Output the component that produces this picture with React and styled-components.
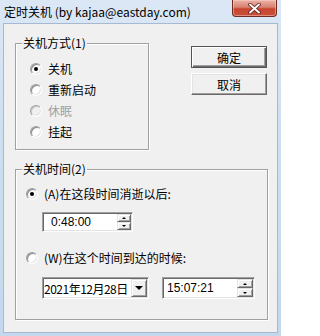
import React from 'react';
import styled, { createGlobalStyle } from 'styled-components';

const GlobalStyle = createGlobalStyle`
  html, body {
    margin: 0;
    padding: 0;
  }
  body {
    font-family: "Noto Sans CJK SC", "Liberation Sans", sans-serif;
    font-size: 12px;
    color: #000;
  }
`;

const Window = styled.div`
  box-sizing: border-box;
  width: 281px;
  height: 336px;
  display: flex;
  flex-direction: column;
  padding: 0 3px 3px;
  background: linear-gradient(to bottom, #dbe7f5 0%, #cddff1 40%, #c4d8ee 100%);
`;

const TitleBar = styled.div`
  height: 23px;
  display: flex;
  align-items: flex-start;
  justify-content: space-between;
`;

const Title = styled.div`
  padding-left: 1px;
  line-height: 23px;
  font-size: 12px;
  color: #000;
  white-space: nowrap;
`;

const CloseButton = styled.div`
  box-sizing: border-box;
  width: 45px;
  height: 17px;
  margin-right: 1px;
  display: flex;
  align-items: center;
  justify-content: center;
  border: 1px solid #6e2c22;
  border-top: none;
  border-radius: 0 0 4px 4px;
  background: linear-gradient(to bottom, #eab3a6 0%, #d98170 45%, #c7452f 55%, #c9503a 100%);
  box-shadow: inset 0 0 0 1px rgba(255, 220, 210, 0.45);
`;

const Client = styled.div`
  flex: 1;
  box-sizing: border-box;
  background: #f0f0f0;
  border: 1px solid #a6b9d0;
  padding: 19px 0 0 11px;
`;

const TopRow = styled.div`
  display: flex;
  align-items: flex-start;
`;

const GroupBox = styled.div`
  position: relative;
  box-sizing: border-box;
  width: ${p => p.w}px;
  padding: ${p => p.pad};
  border: 1px solid #a0a0a0;
  box-shadow: 1px 1px 0 #fff, inset 1px 1px 0 #fff;
  margin-top: ${p => p.mt || 0}px;
`;

const GroupLabel = styled.span`
  position: absolute;
  top: -8px;
  left: 6px;
  padding: 0 1px;
  line-height: 14px;
  background: #f0f0f0;
  white-space: nowrap;
`;

const RadioRow = styled.div`
  height: 21px;
  display: flex;
  align-items: center;
  gap: 6px;
  margin-top: ${p => p.mt || 0}px;
  color: ${p => (p.disabled ? '#a0a0a0' : '#000')};
  white-space: nowrap;
`;

const RadioCircle = styled.span`
  box-sizing: border-box;
  width: 12px;
  height: 12px;
  flex: none;
  border-radius: 50%;
  display: flex;
  align-items: center;
  justify-content: center;
  border: 1px solid;
  border-color: #a0a0a0 #fff #fff #a0a0a0;
  background: ${p => (p.disabled ? '#f0f0f0' : 'radial-gradient(circle at 60% 60%, #fff 40%, #e6e6e6 100%)')};
  box-shadow: inset 1px 1px 0 ${p => (p.disabled ? '#c8c8c8' : '#8a8a8a')},
    inset -1px -1px 0 #e3e3e3;

  &::after {
    content: '';
    width: 4px;
    height: 4px;
    border-radius: 50%;
    background: #000;
    display: ${p => (p.checked ? 'block' : 'none')};
  }
`;

const ButtonColumn = styled.div`
  display: flex;
  flex-direction: column;
  gap: 5px;
  margin: 3px 0 0 42px;
`;

const PushButton = styled.div`
  box-sizing: border-box;
  width: 76px;
  height: 22px;
  display: flex;
  align-items: center;
  justify-content: center;
  background: #f0f0f0;
  border: 1px solid;
  border-color: ${p => (p.primary ? '#555' : '#fff #696969 #696969 #fff')};
  box-shadow: ${p =>
    p.primary
      ? 'inset 1px 1px 0 #fff, inset -1px -1px 0 #696969, inset -2px -2px 0 #a0a0a0'
      : 'inset -1px -1px 0 #a0a0a0, inset 1px 1px 0 #e3e3e3'};
`;

const Sunken = styled.div`
  box-sizing: border-box;
  width: ${p => p.w}px;
  height: ${p => p.h}px;
  display: flex;
  background: #fff;
  border: 1px solid;
  border-color: #a0a0a0 #fff #fff #a0a0a0;
  box-shadow: inset 1px 1px 0 #696969, inset -1px -1px 0 #e3e3e3;
  padding: 1px;
`;

const FieldText = styled.div`
  flex: 1;
  display: flex;
  align-items: center;
  padding-left: ${p => p.pl}px;
  font-family: ${p => (p.cjk ? '"Noto Sans CJK SC", sans-serif' : '"Liberation Sans", "DejaVu Sans", sans-serif')};
  letter-spacing: ${p => p.ls || 0}px;
  white-space: nowrap;
`;

const EditIndent = styled.div`
  margin: ${p => p.mt}px 0 0 16px;
  display: flex;
  gap: 13px;
`;

const SpinColumn = styled.div`
  width: ${p => p.w}px;
  display: flex;
  flex-direction: column;
`;

const RaisedButton = styled.div`
  box-sizing: border-box;
  flex: 1;
  display: flex;
  align-items: center;
  justify-content: center;
  background: #f0f0f0;
  border: 1px solid;
  border-color: #e3e3e3 #696969 #696969 #e3e3e3;
  box-shadow: inset 1px 1px 0 #fff, inset -1px -1px 0 #a0a0a0;
`;

const DropButton = styled(RaisedButton)`
  flex: none;
  width: 16px;
`;

const Arrow = styled.span`
  width: 0;
  height: 0;
  border-left: ${p => p.size}px solid transparent;
  border-right: ${p => p.size}px solid transparent;
  ${p => (p.up ? 'border-bottom' : 'border-top')}: ${p => p.tall}px solid #000;
`;

const Spinner = ({ w }) => (
  <SpinColumn w={w}>
    <RaisedButton>
      <Arrow up size={2} tall={2} />
    </RaisedButton>
    <RaisedButton>
      <Arrow size={2} tall={2} />
    </RaisedButton>
  </SpinColumn>
);

const Radio = ({ label, checked, disabled, mt }) => (
  <RadioRow disabled={disabled} mt={mt}>
    <RadioCircle checked={checked} disabled={disabled} />
    <span>{label}</span>
  </RadioRow>
);

export default function App() {
  return (
    <>
      <GlobalStyle />
      <Window>
        <TitleBar>
          <Title>定时关机 (by kajaa@eastday.com)</Title>
          <CloseButton>
            <svg width="13" height="11" viewBox="0 0 13 11">
              <path d="M2 1.5 L11 9.5 M11 1.5 L2 9.5" stroke="#5a2018" strokeWidth="3.6" strokeLinecap="round" />
              <path d="M2 1.5 L11 9.5 M11 1.5 L2 9.5" stroke="#fff" strokeWidth="1.9" strokeLinecap="round" />
            </svg>
          </CloseButton>
        </TitleBar>
        <Client>
          <TopRow>
            <GroupBox w={134} pad="14px 0 7px 14px">
              <GroupLabel>关机方式(1)</GroupLabel>
              <Radio label="关机" checked />
              <Radio label="重新启动" />
              <Radio label="休眠" disabled />
              <Radio label="挂起" />
            </GroupBox>
            <ButtonColumn>
              <PushButton primary>确定</PushButton>
              <PushButton>取消</PushButton>
            </ButtonColumn>
          </TopRow>
          <GroupBox w={253} mt={19} pad="13px 0 20px 10px">
            <GroupLabel>关机时间(2)</GroupLabel>
            <Radio label="(A)在这段时间消逝以后:" checked />
            <EditIndent mt={8}>
              <Sunken w={91} h={20}>
                <FieldText pl={7}>0:48:00</FieldText>
                <Spinner w={14} />
              </Sunken>
            </EditIndent>
            <Radio label="(W)在这个时间到达的时候:" mt={15} />
            <EditIndent mt={9}>
              <Sunken w={107} h={22}>
                <FieldText pl={0} cjk ls={-0.5}>2021年12月28日</FieldText>
                <DropButton>
                  <Arrow size={4} tall={4} />
                </DropButton>
              </Sunken>
              <Sunken w={93} h={22}>
                <FieldText pl={3}>15:07:21</FieldText>
                <Spinner w={16} />
              </Sunken>
            </EditIndent>
          </GroupBox>
        </Client>
      </Window>
    </>
  );
}
